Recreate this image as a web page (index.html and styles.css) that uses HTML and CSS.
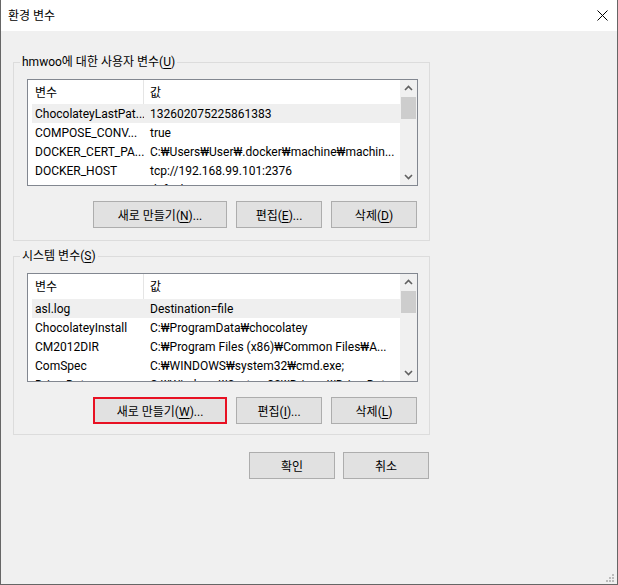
FILE: index.html
```html
<!DOCTYPE html>
<html lang="ko">
<head>
  <meta charset="UTF-8" />
  <title>환경 변수</title>
  <link rel="stylesheet" href="styles.css">
</head>
<body>
  <div class="window">
    <div class="titlebar">
      <span class="title">환경 변수</span>
      <svg class="close" width="11" height="11" viewBox="0 0 11 11">
        <path d="M0.5 0.5 L10.5 10.5 M10.5 0.5 L0.5 10.5" stroke="#000" stroke-width="1" fill="none"/>
      </svg>
    </div>

    <div class="content">
      <fieldset class="group">
        <legend>hmwoo에 대한 사용자 변수(<u>U</u>)</legend>
        <div class="group-body">
          <div class="list">
            <div class="list-view">
              <div class="list-head">
                <span class="col-name">변수</span>
                <span class="col-value">값</span>
              </div>
              <div class="row selected">
                <span class="col-name">ChocolateyLastPat...</span>
                <span class="col-value">132602075225861383</span>
              </div>
              <div class="row">
                <span class="col-name">COMPOSE_CONV...</span>
                <span class="col-value">true</span>
              </div>
              <div class="row">
                <span class="col-name">DOCKER_CERT_PA...</span>
                <span class="col-value">C:₩Users₩User₩.docker₩machine₩machin...</span>
              </div>
              <div class="row">
                <span class="col-name">DOCKER_HOST</span>
                <span class="col-value">tcp://192.168.99.101:2376</span>
              </div>
              <div class="row">
                <span class="col-name">DOCKER_MACHINE...</span>
                <span class="col-value">default</span>
              </div>
            </div>
            <div class="scrollbar">
              <svg class="arrow" width="17" height="17" viewBox="0 0 17 17">
                <path d="M5 10 L8.5 6.5 L12 10" stroke="#606060" stroke-width="1.6" fill="none"/>
              </svg>
              <div class="thumb"></div>
              <div class="track"></div>
              <svg class="arrow" width="17" height="17" viewBox="0 0 17 17">
                <path d="M5 7 L8.5 10.5 L12 7" stroke="#606060" stroke-width="1.6" fill="none"/>
              </svg>
            </div>
          </div>
          <div class="buttons">
            <button class="btn wide">새로 만들기(<u>N</u>)...</button>
            <button class="btn">편집(<u>E</u>)...</button>
            <button class="btn">삭제(<u>D</u>)</button>
          </div>
        </div>
      </fieldset>

      <fieldset class="group system">
        <legend>시스템 변수(<u>S</u>)</legend>
        <div class="group-body">
          <div class="list">
            <div class="list-view">
              <div class="list-head">
                <span class="col-name">변수</span>
                <span class="col-value">값</span>
              </div>
              <div class="row selected">
                <span class="col-name">asl.log</span>
                <span class="col-value">Destination=file</span>
              </div>
              <div class="row">
                <span class="col-name">ChocolateyInstall</span>
                <span class="col-value">C:₩ProgramData₩chocolatey</span>
              </div>
              <div class="row">
                <span class="col-name">CM2012DIR</span>
                <span class="col-value">C:₩Program Files (x86)₩Common Files₩A...</span>
              </div>
              <div class="row">
                <span class="col-name">ComSpec</span>
                <span class="col-value">C:₩WINDOWS₩system32₩cmd.exe;</span>
              </div>
              <div class="row">
                <span class="col-name">DriverData</span>
                <span class="col-value">C:₩Windows₩System32₩Drivers₩DriverData</span>
              </div>
            </div>
            <div class="scrollbar">
              <svg class="arrow" width="17" height="17" viewBox="0 0 17 17">
                <path d="M5 10 L8.5 6.5 L12 10" stroke="#606060" stroke-width="1.6" fill="none"/>
              </svg>
              <div class="thumb"></div>
              <div class="track"></div>
              <svg class="arrow" width="17" height="17" viewBox="0 0 17 17">
                <path d="M5 7 L8.5 10.5 L12 7" stroke="#606060" stroke-width="1.6" fill="none"/>
              </svg>
            </div>
          </div>
          <div class="buttons">
            <button class="btn wide focused">새로 만들기(<u>W</u>)...</button>
            <button class="btn">편집(<u>I</u>)...</button>
            <button class="btn">삭제(<u>L</u>)</button>
          </div>
        </div>
      </fieldset>

      <div class="dialog-buttons">
        <button class="btn">확인</button>
        <button class="btn">취소</button>
      </div>
    </div>

    <svg class="grip" width="8" height="8" viewBox="0 0 8 8">
      <rect x="6" y="0" width="2" height="2" fill="#bcbcbc"/>
      <rect x="3" y="3" width="2" height="2" fill="#bcbcbc"/>
      <rect x="6" y="3" width="2" height="2" fill="#bcbcbc"/>
      <rect x="0" y="6" width="2" height="2" fill="#bcbcbc"/>
      <rect x="3" y="6" width="2" height="2" fill="#bcbcbc"/>
      <rect x="6" y="6" width="2" height="2" fill="#bcbcbc"/>
    </svg>
  </div>
</body>
</html>
```

FILE: styles.css
```css
body {
  margin: 0;
  font-family: Roboto, "Noto Sans CJK KR", sans-serif;
  font-size: 12px;
  color: #000;
}

.window {
  position: relative;
  width: 618px;
  height: 585px;
  box-sizing: border-box;
  border: 1px solid #666;
  border-top: 0;
  background: #f0f0f0;
}

.titlebar {
  height: 31px;
  background: #fff;
  display: flex;
  align-items: center;
  justify-content: space-between;
  padding: 0 9px 0 7px;
}

.title {
  line-height: 16px;
}

.close {
  display: block;
}

.content {
  padding: 23px 0 0 12px;
}

.group {
  width: 417px;
  min-width: 0;
  box-sizing: border-box;
  margin: 0;
  padding: 0;
  border: 1px solid #dcdcdc;
}

.group legend {
  margin-left: 6px;
  padding: 0 2px;
  line-height: 16px;
}

.group u,
.btn u {
  text-decoration: underline;
  text-underline-offset: 2px;
}

.group-body {
  padding: 9px 11px 12px 13px;
}

.system {
  margin-top: 7px;
}

.system .group-body {
  padding-bottom: 10px;
}

.list {
  display: flex;
  height: 107px;
  box-sizing: border-box;
  border: 1px solid #828790;
  background: #fff;
}

.system .list {
  height: 109px;
}

.list-view {
  flex: 1;
  min-width: 0;
  padding-left: 4px;
  overflow: hidden;
}

.list-head {
  display: flex;
  height: 24px;
  box-sizing: border-box;
  padding-top: 2px;
  line-height: 22px;
}

.system .list-head {
  height: 25px;
}

.list-head .col-name {
  border-right: 1px solid #e5e5e5;
  margin-top: -2px;
  padding-top: 2px;
}

.row {
  display: flex;
  height: 19px;
  box-sizing: border-box;
  padding-top: 2px;
  line-height: 17px;
  white-space: nowrap;
}

.row.selected {
  background: #efefef;
}

.col-name {
  width: 112px;
  box-sizing: border-box;
  padding-left: 3px;
  flex-shrink: 0;
  overflow: hidden;
}

.col-value {
  padding-left: 6px;
}

.scrollbar {
  width: 17px;
  flex-shrink: 0;
  display: flex;
  flex-direction: column;
  background: #f0f0f0;
}

.arrow {
  display: block;
  flex-shrink: 0;
}

.thumb {
  height: 22px;
  margin: 0 1px;
  background: #cdcdcd;
}

.track {
  flex: 1;
}

.buttons {
  display: flex;
  justify-content: flex-end;
  gap: 9px;
  margin-top: 15px;
  padding-right: 1px;
}

.btn {
  width: 86px;
  height: 27px;
  box-sizing: border-box;
  border: 1px solid #adadad;
  background: #e1e1e1;
  font-family: inherit;
  font-size: 12px;
  color: #000;
  padding: 0;
}

.btn.wide {
  width: 134px;
}

.btn.focused {
  border: 2px solid #e81123;
}

.dialog-buttons {
  display: flex;
  justify-content: flex-end;
  gap: 8px;
  width: 416px;
  margin-top: 17px;
}

.grip {
  position: absolute;
  right: 3px;
  bottom: 2px;
}
```
